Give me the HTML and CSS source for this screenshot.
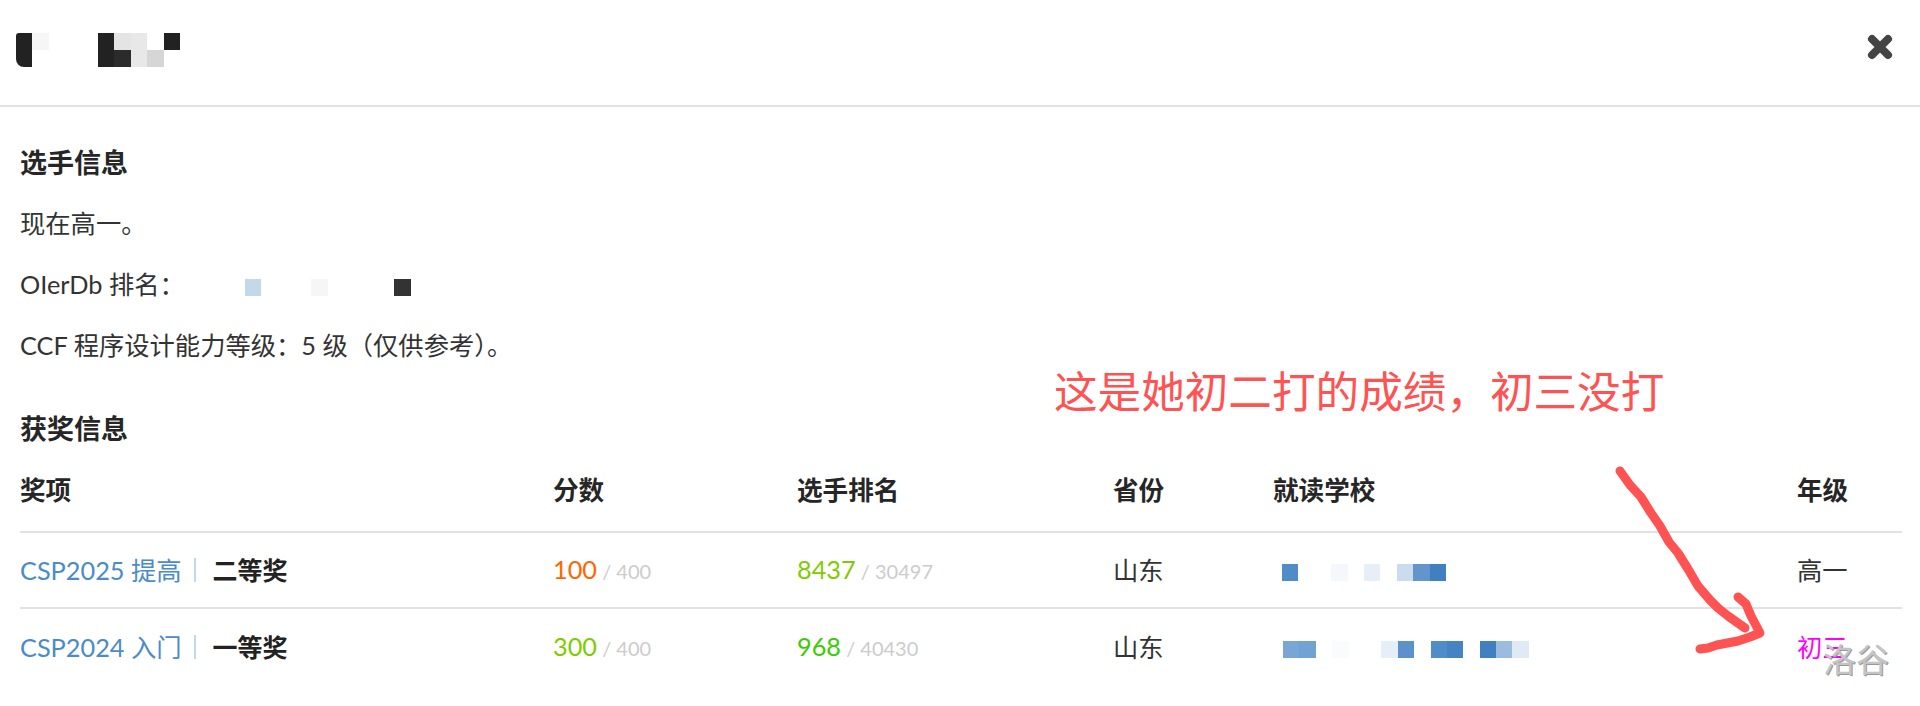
FILE: index.html
```html
<!DOCTYPE html>
<html lang="zh-CN">
<head>
  <meta charset="UTF-8" />
  <title>选手信息</title>
  <link rel="stylesheet" href="styles.css">
</head>
<body>
  <div class="page">
    <header class="top">
      <div class="mosaic two-rows">
        <i class="dark round-top"></i><i class="dark round-bottom"></i>
        <i class="g1"></i><i></i>
        <i></i><i></i>
        <i></i><i></i>
        <i></i><i></i>
        <i class="dark"></i><i class="dark"></i>
        <i class="g2"></i><i class="dark2"></i>
        <i class="g3"></i><i class="g3"></i>
        <i></i><i class="g4"></i>
        <i class="dark"></i><i></i>
      </div>
      <svg class="close" viewBox="0 0 26 26" width="26" height="26">
        <path d="M5 5 L21 21 M21 5 L5 21" />
      </svg>
    </header>

    <main class="content">
      <h3 class="title">选手信息</h3>
      <p>现在高一。</p>
      <p>OIerDb 排名：<span class="mosaic rank"><i class="b7"></i><i></i><i></i><i></i><i class="g1"></i><i></i><i></i><i></i><i></i><i class="dark3"></i></span></p>
      <p>CCF 程序设计能力等级：5 级（仅供参考）。</p>
      <h3 class="title award-title">获奖信息</h3>

      <table class="awards">
        <colgroup>
          <col class="c-award"><col class="c-score"><col class="c-rank"><col class="c-prov"><col class="c-school"><col class="c-grade">
        </colgroup>
        <thead>
          <tr>
            <th>奖项</th>
            <th>分数</th>
            <th>选手排名</th>
            <th>省份</th>
            <th>就读学校</th>
            <th>年级</th>
          </tr>
        </thead>
        <tbody>
          <tr>
            <td><a class="contest">CSP2025 提高</a><span class="prize">二等奖</span></td>
            <td><span class="orange">100</span><span class="total"> / 400</span></td>
            <td><span class="lime">8437</span><span class="total"> / 30497</span></td>
            <td>山东</td>
            <td><span class="mosaic school"><i class="b2"></i><i></i><i></i><i class="b9"></i><i></i><i class="b8"></i><i></i><i class="b6"></i><i class="b3"></i><i class="b1"></i></span></td>
            <td>高一</td>
          </tr>
          <tr>
            <td><a class="contest">CSP2024 入门</a><span class="prize">一等奖</span></td>
            <td><span class="lime">300</span><span class="total"> / 400</span></td>
            <td><span class="green">968</span><span class="total"> / 40430</span></td>
            <td>山东</td>
            <td><span class="mosaic school second"><i class="b4"></i><i class="b10"></i><i></i><i class="g5"></i><i></i><i></i><i class="b8"></i><i class="b11"></i><i></i><i class="b2"></i><i class="b12"></i><i></i><i class="b1"></i><i class="b5"></i><i class="b13"></i></span></td>
            <td class="magenta">初三</td>
          </tr>
        </tbody>
      </table>
    </main>

    <div class="note">这是她初二打的成绩，初三没打</div>
    <svg class="arrow" viewBox="0 0 1920 706" width="1920" height="706">
      <path d="M1620 471 L1630 485 L1641 497 L1651 513 L1660 526 L1669 542 L1678 553 L1688 569 L1698 586 L1710 600 L1718 608 L1728 616 L1745 628" />
      <path d="M1738 597 L1746 604 L1751 616 L1760 633 L1750 637 L1738 641 L1717 645 L1708 648 L1700 649" />
    </svg>
    <div class="watermark">洛谷</div>
  </div>
</body>
</html>
```

FILE: styles.css
```css
* {
  margin: 0;
  padding: 0;
  box-sizing: border-box;
}

body {
  background: #fff;
  color: #333;
  font-family: Lato, "Noto Sans CJK SC", sans-serif;
  font-size: 25.3px;
}

.page {
  position: relative;
  height: 706px;
  overflow: hidden;
}

.top {
  display: flex;
  justify-content: space-between;
  align-items: flex-start;
  height: 107px;
  padding: 33px 27px 0 16px;
  border-bottom: 2px solid #e2e2e2;
}

.close {
  margin-top: 1px;
}

.close path {
  fill: none;
  stroke: #444;
  stroke-width: 8;
  stroke-linecap: round;
}

.content {
  padding: 40px 18px 0 20px;
}

.title {
  font-size: 27px;
  font-weight: 700;
  line-height: 32px;
  color: #262626;
  margin-bottom: 28px;
}

.content p {
  line-height: 32px;
  margin-bottom: 29px;
}

.award-title {
  margin-top: 52px;
  margin-bottom: 0;
}

/* pixelated blocks */
.mosaic {
  display: inline-grid;
  grid-auto-flow: column;
  grid-auto-columns: 16.4px;
  grid-template-rows: 17px;
  vertical-align: middle;
}

.two-rows {
  grid-template-rows: 17px 17px;
}

.rank {
  margin-left: 60px;
  grid-auto-columns: 16.6px;
}

.school {
  margin-left: 9px;
}

.school.second {
  margin-left: 10px;
}

.dark { background: #222; }
.dark2 { background: #2b2b2b; }
.dark3 { background: #333; }
.round-top { border-radius: 3px 0 0 0; }
.round-bottom { border-radius: 0 0 0 8px; }
.g1 { background: #f6f6f6; }
.g2 { background: #e4e4e4; }
.g3 { background: #e8e8e8; }
.g4 { background: #d6d6d6; }
.g5 { background: #fafbfd; }
.b1 { background: #4080c0; }
.b2 { background: #4f8cc8; }
.b3 { background: #6394cc; }
.b4 { background: #78a7d6; }
.b5 { background: #9bbcdf; }
.b6 { background: #cbdcef; }
.b7 { background: #c4d8ec; }
.b8 { background: #e6eef7; }
.b9 { background: #f4f7fc; }
.b10 { background: #70a2d4; }
.b11 { background: #5b92cb; }
.b12 { background: #4683c3; }
.b13 { background: #e0eaf5; }

.awards {
  width: 1882px;
  table-layout: fixed;
  border-collapse: collapse;
}

.c-award { width: 533px; }
.c-score { width: 244px; }
.c-rank { width: 316px; }
.c-prov { width: 160px; }
.c-school { width: 524px; }
.c-grade { width: 105px; }

.awards th {
  height: 87px;
  font-size: 25.6px;
  text-align: left;
  font-weight: 700;
  color: #262626;
  border-bottom: 2px solid #e2e2e2;
}

.awards td {
  height: 76px;
  padding-bottom: 2px;
  border-bottom: 2px solid #e2e2e2;
}

.awards tbody tr:last-child td {
  border-bottom: none;
}

.contest {
  display: inline-block;
  color: #4a8bc9;
  padding-right: 12px;
  line-height: 24px;
  border-right: 2px solid #c4d8ec;
}

.prize {
  margin-left: 17px;
  font-size: 25px;
  font-weight: 700;
  color: #222;
}

.total {
  color: #ccc;
  font-size: 20px;
}

.orange { color: #f60; }
.lime { color: #7fcc00; }
.green { color: #3ccb00; }
.magenta { color: #f0f; }

.note {
  position: absolute;
  left: 1054px;
  top: 359px;
  font-size: 43.6px;
  line-height: 64px;
  color: #ff5252;
  white-space: nowrap;
}

.arrow {
  position: absolute;
  left: 0;
  top: 0;
}

.arrow path {
  fill: none;
  stroke: #ff5252;
  stroke-width: 9;
  stroke-linecap: round;
  stroke-linejoin: round;
}

.watermark {
  position: absolute;
  left: 1823px;
  top: 638px;
  font-size: 33px;
  line-height: 42px;
  color: #c4c4c4;
  text-shadow: 1px 1px 0 #999;
}
```
